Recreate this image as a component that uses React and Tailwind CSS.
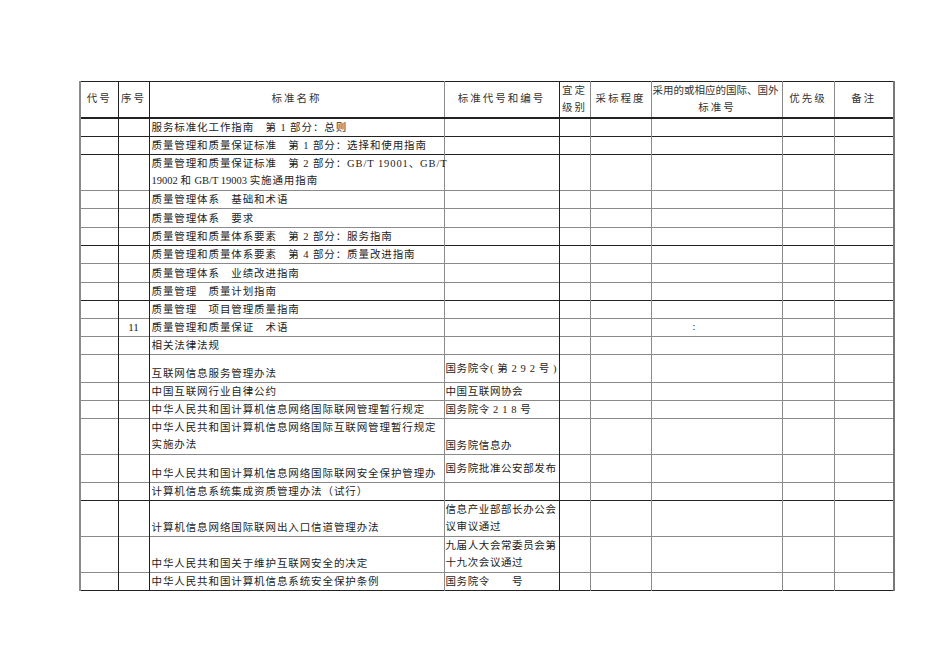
import React from 'react';

const FONT = { fontFamily: '"Liberation Serif", "Noto Sans CJK SC", serif' };

// left border per column
const colLine = [
  'border-l-2 border-l-[#8a8a8a]',
  'border-l border-l-[#222]',
  'border-l border-l-[#222]',
  'border-l border-l-[#8a8a8a]',
  'border-l border-l-[#222]',
  'border-l border-l-[#8a8a8a]',
  'border-l border-l-[#8a8a8a]',
  'border-l border-l-[#8a8a8a]',
  'border-l border-l-[#8a8a8a]',
];

const widths = ['w-[38px]', 'w-[31px]', 'w-[295px]', 'w-[115px]', 'w-[31px]', 'w-[61px]', 'w-[131px]', 'w-[52px]', 'w-[60px]'];

const rows = [
  { dark: true, name: ['服务标准化工作指南　第 1 部分：总则'] },
  { dark: true, name: ['质量管理和质量保证标准　第 1 部分：选择和使用指南'] },
  {
    name: [
      '质量管理和质量保证标准　第 2 部分：GB/T 19001、GB/T',
      <>
        <span className="tracking-normal">19002 </span>和<span className="tracking-normal"> GB/T 19003 </span>实施通用指南
      </>,
    ],
  },
  { name: ['质量管理体系　基础和术语'] },
  { pad: 'pt-[1px]', name: ['质量管理体系　要求'] },
  { dark: true, name: ['质量管理和质量体系要素　第 2 部分：服务指南'] },
  { name: ['质量管理和质量体系要素　第 4 部分：质量改进指南'] },
  { pad: 'pt-[1px]', name: ['质量管理体系　业绩改进指南'] },
  { dark: true, name: ['质量管理　质量计划指南'] },
  { name: ['质量管理　项目管理质量指南'] },
  { seq: '11', colon: true, name: ['质量管理和质量保证　术语'] },
  { name: ['相关法律法规'] },
  { pad: 'pt-[10px]', name: ['互联网信息服务管理办法'], code: ['国务院令( 第 2 9 2 号 )'] },
  { name: ['中国互联网行业自律公约'], code: ['中国互联网协会'] },
  { name: ['中华人民共和国计算机信息网络国际联网管理暂行规定'], code: ['国务院令 2 1 8 号'] },
  { name: ['中华人民共和国计算机信息网络国际互联网管理暂行规定', '实施办法'], code: ['国务院信息办'], codeBottom: true },
  { pad: 'pt-[10px]', name: ['中华人民共和国计算机信息网络国际联网安全保护管理办'], code: ['国务院批准公安部发布'] },
  { dark: true, name: ['计算机信息系统集成资质管理办法（试行）'] },
  { bottom: true, name: ['计算机信息网络国际联网出入口信道管理办法'], code: ['信息产业部部长办公会', '议审议通过'] },
  { bottom: true, name: ['中华人民共和国关于维护互联网安全的决定'], code: ['九届人大会常委员会第', '十九次会议通过'] },
  { dark: true, name: ['中华人民共和国计算机信息系统安全保护条例'], code: ['国务院令　　号'] },
];

function Lines({ lines, pad = '' }) {
  const lh = lines.length > 1 ? 'h-[17.5px] leading-[17.5px]' : 'h-[17px] leading-[17px]';
  return (
    <div className={pad}>
      {lines.map((l, i) => (
        <div key={i} className={`${lh} whitespace-pre overflow-visible`}>
          {l}
        </div>
      ))}
    </div>
  );
}

const App = () => {
  return (
    <div className="min-h-[672px] w-[950px] bg-white pt-[81px] pl-[79px]" style={FONT}>
      <table className="table-fixed border-collapse w-[814px] text-[10.5px] text-[#1c1c1c]">
        <colgroup>
          {widths.map((w, i) => (
            <col key={i} className={w} />
          ))}
        </colgroup>
        <thead>
          <tr className="h-[36px] border-t border-t-[#222] border-b-2 border-b-[#222] text-[#333]">
            <th className={`${colLine[0]} font-normal text-center tracking-[2px]`}>代号</th>
            <th className={`${colLine[1]} font-normal text-center tracking-[2px]`}>序号</th>
            <th className={`${colLine[2]} font-normal text-center tracking-[2px]`}>标准名称</th>
            <th className={`${colLine[3]} font-normal text-center tracking-[2px]`}>标准代号和编号</th>
            <th className={`${colLine[4]} font-normal text-center leading-[17px] tracking-[2px]`}>
              宜定<br />级别
            </th>
            <th className={`${colLine[5]} font-normal text-center tracking-[2px]`}>采标程度</th>
            <th className={`${colLine[6]} font-normal text-left pl-[1px] leading-[17px] whitespace-nowrap`}>
              <div className="tracking-[0px]">采用的或相应的国际、国外</div>
              <div className="text-center tracking-[2px]">标准号</div>
            </th>
            <th className={`${colLine[7]} font-normal text-center tracking-[2px]`}>优先级</th>
            <th className={`${colLine[8]} border-r-2 border-r-[#777] font-normal text-center tracking-[2px]`}>备注</th>
          </tr>
        </thead>
        <tbody>
          {rows.map((r, i) => (
            <tr key={i} className={r.dark ? 'border-b border-b-[#222]' : 'border-b border-b-[#8a8a8a]'}>
              <td className={colLine[0]}></td>
              <td className={`${colLine[1]} text-center text-[11px]`}>{r.seq}</td>
              <td className={`${colLine[2]} p-0 pl-[2px] tracking-[0.9px] ${r.bottom ? 'align-bottom' : 'align-middle'}`}>
                <Lines lines={r.name} pad={r.pad} />
              </td>
              <td className={`${colLine[3]} p-0 pl-[1px] tracking-[0.6px] ${r.bottom || r.codeBottom ? 'align-bottom' : 'align-middle'}`}>
                {r.code && <Lines lines={r.code} />}
              </td>
              <td className={colLine[4]}></td>
              <td className={colLine[5]}></td>
              <td className={`${colLine[6]} text-left pl-[41px]`}>{r.colon ? ':' : ''}</td>
              <td className={colLine[7]}></td>
              <td className={`${colLine[8]} border-r-2 border-r-[#777]`}></td>
            </tr>
          ))}
        </tbody>
      </table>
    </div>
  );
};

export default App;
